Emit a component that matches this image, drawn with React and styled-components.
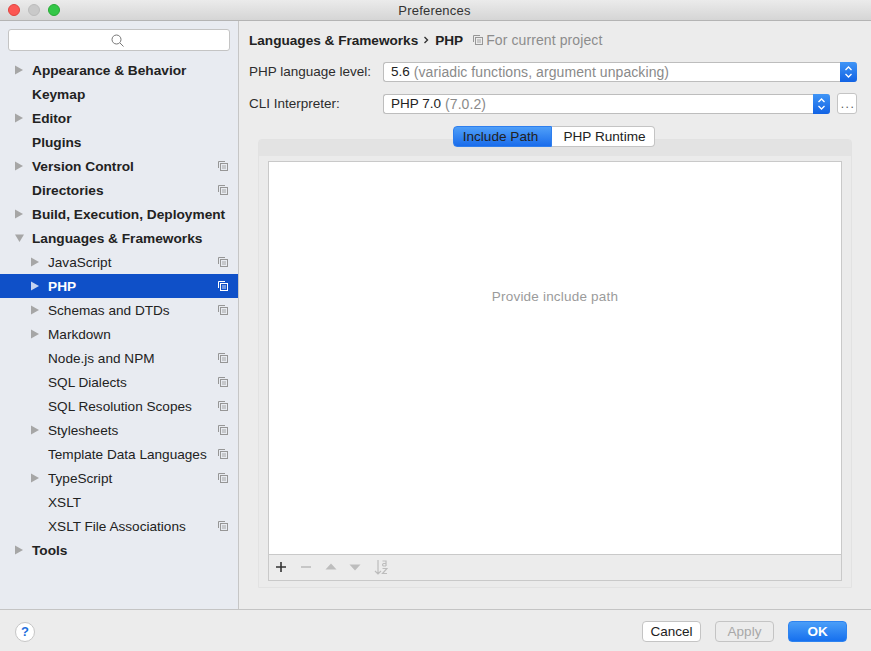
import React from 'react';
import styled, { createGlobalStyle } from 'styled-components';

const Global = createGlobalStyle`
  html, body { margin: 0; padding: 0; background: #ececec; }
  body { font-family: "Liberation Sans", Arial, sans-serif; font-size: 14px; color: #222; }
  * { box-sizing: border-box; }
`

const Window = styled.div`
  width: 871px;
  height: 651px;
  display: flex;
  flex-direction: column;
  overflow: hidden;
  background: #ececec;
`

const TitleBar = styled.div`
  height: 21px;
  flex: none;
  display: flex;
  align-items: center;
  padding-left: 8px;
  gap: 8px;
  background: linear-gradient(#ebebeb, #d5d5d5);
  border-bottom: 1px solid #b4b4b4;
`

const Light = styled.span`
  width: 12px;
  height: 12px;
  border-radius: 50%;
  flex: none;
  background: ${p => p.color};
  border: 1px solid ${p => p.edge};
`

const Title = styled.div`
  flex: 1;
  text-align: center;
  font-size: 13px;
  color: #333;
  letter-spacing: 0.2px;
  margin-left: -70px;
`

const Body = styled.div`
  flex: 1;
  display: flex;
  min-height: 0;
`

const Sidebar = styled.div`
  width: 239px;
  flex: none;
  background: #e8ebf1;
  border-right: 1px solid #c6c6c6;
  padding-top: 8px;
`

const Search = styled.div`
  width: 222px;
  height: 22px;
  margin: 0 0 7px 8px;
  padding-right: 4px;
  background: #fff;
  border: 1px solid #c4c4c4;
  border-radius: 3px;
  display: flex;
  align-items: center;
  justify-content: center;
`

const Row = styled.div`
  height: 24px;
  display: flex;
  align-items: center;
  padding-left: ${p => (p.$child ? 31 : 15)}px;
  padding-right: 10px;
  background: ${p => (p.$selected ? '#0f50c8' : 'transparent')};
  color: ${p => (p.$selected ? '#fff' : '#222')};
  font-weight: ${p => (p.$child && !p.$selected ? 400 : 700)};
  font-size: ${p => (p.$child && !p.$selected ? 13.6 : 13.7)}px;
`

const Arrow = styled.span`
  width: 17px;
  flex: none;
  display: flex;
  align-items: center;
  color: ${p => (p.$selected ? '#c5d4f0' : '#a6a6a6')};
`

const RowLabel = styled.span`
  flex: 1;
  white-space: nowrap;
`

const Main = styled.div`
  flex: 1;
  min-width: 0;
  padding: 9px 14px 0 10px;
  display: flex;
  flex-direction: column;
`

const Breadcrumb = styled.div`
  height: 20px;
  display: flex;
  align-items: center;
  font-weight: 700;
  font-size: 13.6px;
  margin-bottom: 11px;
  white-space: nowrap;
`

const Hint = styled.span`
  display: flex;
  align-items: center;
  gap: 3px;
  margin-left: 10px;
  font-weight: 400;
  font-size: 14px;
  letter-spacing: 0.1px;
  color: #8c8c8c;
`

const FieldRow = styled.div`
  height: 21px;
  display: flex;
  align-items: center;
  margin-bottom: 11px;
`

const FieldLabel = styled.label`
  width: 134px;
  flex: none;
  font-size: 13.5px;
  color: #2c2c2c;
`

const Select = styled.div`
  flex: 1;
  height: 20px;
  display: flex;
  align-items: center;
  background: #fff;
  border: 1px solid #bdbdbd;
  border-right: none;
  border-radius: 3px;
  padding-left: 7px;
  font-size: 13.5px;
  margin-right: ${p => (p.$short ? '7px' : 0)};
`

const Muted = styled.span`
  color: #8a8a8a;
  font-size: 14px;
  letter-spacing: 0.08px;
  margin-left: 4px;
`

const Stepper = styled.span`
  width: 17px;
  height: 20px;
  margin-left: auto;
  margin-top: -1px;
  margin-bottom: -1px;
  background: linear-gradient(#3f95f6, #1263e4);
  border-radius: 0 3px 3px 0;
  display: flex;
  align-items: center;
  justify-content: center;
  flex: none;
`

const DotsButton = styled.button`
  width: 20px;
  height: 21px;
  padding: 0 0 0 2px;
  background: #fff;
  border: 1px solid #c4c4c4;
  border-radius: 3px;
  font: 400 12px "Liberation Sans", Arial, sans-serif;
  letter-spacing: 1.5px;
  color: #555;
  line-height: 14px;
`

const Tabs = styled.div`
  display: flex;
  justify-content: center;
  height: 21px;
  margin: 1px 0 -8px 0;
  padding-left: 2px;
  position: relative;
  z-index: 1;
`

const Tab = styled.div`
  height: 21px;
  width: ${p => p.$w}px;
  display: flex;
  align-items: center;
  justify-content: center;
  font-size: 13.6px;
  padding: ${p => (p.$active ? '0 4px 0 0' : '0 0 0 3px')};
  background: ${p => (p.$active ? 'linear-gradient(#4f9ff8, #1a6ceb)' : '#fff')};
  color: #222;
  border: 1px solid ${p => (p.$active ? '#2f7fee' : '#c4c4c4')};
  border-left-width: ${p => (p.$active ? 1 : 0)}px;
  border-radius: ${p => (p.$active ? '4px 0 0 4px' : '0 4px 4px 0')};
`

const TabPanel = styled.div`
  margin-left: 9px;
  margin-right: 5px;
  height: 449px;
  background: #ebebeb;
  border: 1px solid #e2e2e2;
  border-radius: 4px 4px 0 0;
  display: flex;
  flex-direction: column;
`

const PanelHead = styled.div`
  height: 16px;
  flex: none;
  background: #e3e3e3;
  border-radius: 3px 3px 0 0;
`

const Inner = styled.div`
  margin: 5px 9px 0 9px;
  height: 420px;
  border: 1px solid #c9c9c9;
  display: flex;
  flex-direction: column;
  flex: none;
`

const EmptyArea = styled.div`
  flex: 1;
  background: #fff;
  display: flex;
  align-items: center;
  justify-content: center;
  color: #9b9b9b;
  font-size: 13.5px;
  letter-spacing: 0.2px;
  padding-bottom: 124px;
`

const ListToolbar = styled.div`
  height: 26px;
  flex: none;
  display: flex;
  align-items: center;
  border-top: 1px solid #c9c9c9;
  padding: 0 0 2px 6px;
  gap: 12.8px;
  background: #ececec;
`

const Footer = styled.div`
  height: 42px;
  flex: none;
  border-top: 1px solid #c4c4c4;
  display: flex;
  align-items: center;
  padding: 2px 24px 0 15px;
  background: #ececec;
`

const Help = styled.div`
  width: 20px;
  height: 20px;
  border-radius: 50%;
  background: #fff;
  border: 1px solid #c6c6c6;
  color: #1f6fdc;
  font-weight: 700;
  font-size: 13px;
  display: flex;
  align-items: center;
  justify-content: center;
  margin-right: auto;
`

const Btn = styled.button`
  width: 59px;
  height: 21px;
  margin-left: 14px;
  padding: 0;
  border-radius: 4px;
  font: ${p => (p.$primary ? 700 : 400)} 13.5px "Liberation Sans", Arial, sans-serif;
  background: ${p => (p.$primary ? 'linear-gradient(#4a9ef8, #1670ee)' : p.$disabled ? '#ececec' : '#fff')};
  color: ${p => (p.$primary ? '#fff' : p.$disabled ? '#a8a8a8' : '#222')};
  border: 1px solid ${p => (p.$primary ? '#2d83f0' : '#c4c4c4')};
`

const CopyIcon = ({ color = '#969696' }) => (
  <svg width="10" height="10" viewBox="0 0 10 10" fill="none" stroke={color} strokeWidth="1">
    <path d="M.5 7V.5H7" />
    <rect x="2.5" y="2.5" width="7" height="7" />
    <path d="M4 5h4M4 7h4" strokeWidth="0.8" />
  </svg>
)

const Tri = ({ open }) => (
  <svg width="10" height="10" viewBox="0 0 10 10">
    <path d={open ? 'M0 1.500h9L4.500 9z' : 'M0 .5l8 4.500-8 4.500z'} fill="currentColor" />
  </svg>
)

const items = [
  { t: 'Appearance & Behavior', a: 1 },
  { t: 'Keymap' },
  { t: 'Editor', a: 1 },
  { t: 'Plugins' },
  { t: 'Version Control', a: 1, c: 1 },
  { t: 'Directories', c: 1 },
  { t: 'Build, Execution, Deployment', a: 1 },
  { t: 'Languages & Frameworks', a: 1, open: 1 },
  { t: 'JavaScript', a: 1, c: 1, child: 1 },
  { t: 'PHP', a: 1, c: 1, child: 1, sel: 1 },
  { t: 'Schemas and DTDs', a: 1, c: 1, child: 1 },
  { t: 'Markdown', a: 1, child: 1 },
  { t: 'Node.js and NPM', c: 1, child: 1 },
  { t: 'SQL Dialects', c: 1, child: 1 },
  { t: 'SQL Resolution Scopes', c: 1, child: 1 },
  { t: 'Stylesheets', a: 1, c: 1, child: 1 },
  { t: 'Template Data Languages', c: 1, child: 1 },
  { t: 'TypeScript', a: 1, c: 1, child: 1 },
  { t: 'XSLT', child: 1 },
  { t: 'XSLT File Associations', c: 1, child: 1 },
  { t: 'Tools', a: 1 },
]

const UpDown = () => (
  <svg width="9" height="14" viewBox="0 0 9 14" fill="none" stroke="#fff" strokeWidth="1.3">
    <path d="M1.500 5L4.500 2l3 3M1.500 9l3 3 3-3" />
  </svg>
)

function App() {
  return (
    <Window>
      <Global />
      <TitleBar>
        <Light color="#fc5753" edge="#e0443e" />
        <Light color="#c9c9c9" edge="#bcbcbc" />
        <Light color="#33c748" edge="#27aa35" />
        <Title>Preferences</Title>
      </TitleBar>
      <Body>
        <Sidebar>
          <Search>
            <svg width="13" height="13" viewBox="0 0 13 13" fill="none" stroke="#777" strokeWidth="1">
              <circle cx="5.500" cy="5.500" r="4.500" />
              <path d="M9 9l3.500 3.500" />
            </svg>
          </Search>
          {items.map(i => (
            <Row key={i.t} $child={i.child} $selected={i.sel}>
              <Arrow $selected={i.sel}>{i.a ? <Tri open={i.open} /> : null}</Arrow>
              <RowLabel>{i.t}</RowLabel>
              {i.c ? <CopyIcon color={i.sel ? '#fff' : '#969696'} /> : null}
            </Row>
          ))}
        </Sidebar>
        <Main>
          <Breadcrumb>
            Languages &amp; Frameworks
            <svg width="17" height="10" viewBox="0 0 17 10" fill="none" stroke="#333" strokeWidth="1.4">
              <path d="M6.500 2l3 3-3 3" />
            </svg>
            PHP
            <Hint><CopyIcon />For current project</Hint>
          </Breadcrumb>
          <FieldRow>
            <FieldLabel>PHP language level:</FieldLabel>
            <Select>5.6<Muted>(variadic functions, argument unpacking)</Muted><Stepper><UpDown /></Stepper></Select>
          </FieldRow>
          <FieldRow>
            <FieldLabel>CLI Interpreter:</FieldLabel>
            <Select $short>PHP 7.0<Muted>(7.0.2)</Muted><Stepper><UpDown /></Stepper></Select>
            <DotsButton>...</DotsButton>
          </FieldRow>
          <Tabs>
            <Tab $active $w={99}>Include Path</Tab>
            <Tab $w={103}>PHP Runtime</Tab>
          </Tabs>
          <TabPanel>
            <PanelHead />
            <Inner>
              <EmptyArea>Provide include path</EmptyArea>
              <ListToolbar>
                <svg width="12" height="12" viewBox="0 0 12 12" stroke="#333" strokeWidth="1.6"><path d="M6 1v10M1 6h10" /></svg>
                <svg width="12" height="12" viewBox="0 0 12 12" stroke="#bdbdbd" strokeWidth="1.6"><path d="M1 6h10" /></svg>
                <svg width="12" height="12" viewBox="0 0 12 12" fill="#bdbdbd"><path d="M6 2.500l5.500 6H.5z" /></svg>
                <svg width="12" height="12" viewBox="0 0 12 12" fill="#bdbdbd"><path d="M.5 3.500h11L6 9.500z" /></svg>
                <svg width="14" height="18" viewBox="0 0 14 18" fill="none" stroke="#bdbdbd" strokeWidth="1.2">
                  <path d="M4 2v14M1 13l3 3 3-3M8.500 3h3.500v5M12 5.500H9.500a1.300 1.300 0 0 0 0 2.500H12M8.500 10.500h4.500L8.500 15.500H13" />
                </svg>
              </ListToolbar>
            </Inner>
          </TabPanel>
        </Main>
      </Body>
      <Footer>
        <Help>?</Help>
        <Btn>Cancel</Btn>
        <Btn $disabled>Apply</Btn>
        <Btn $primary>OK</Btn>
      </Footer>
    </Window>
  )
}

export default App
